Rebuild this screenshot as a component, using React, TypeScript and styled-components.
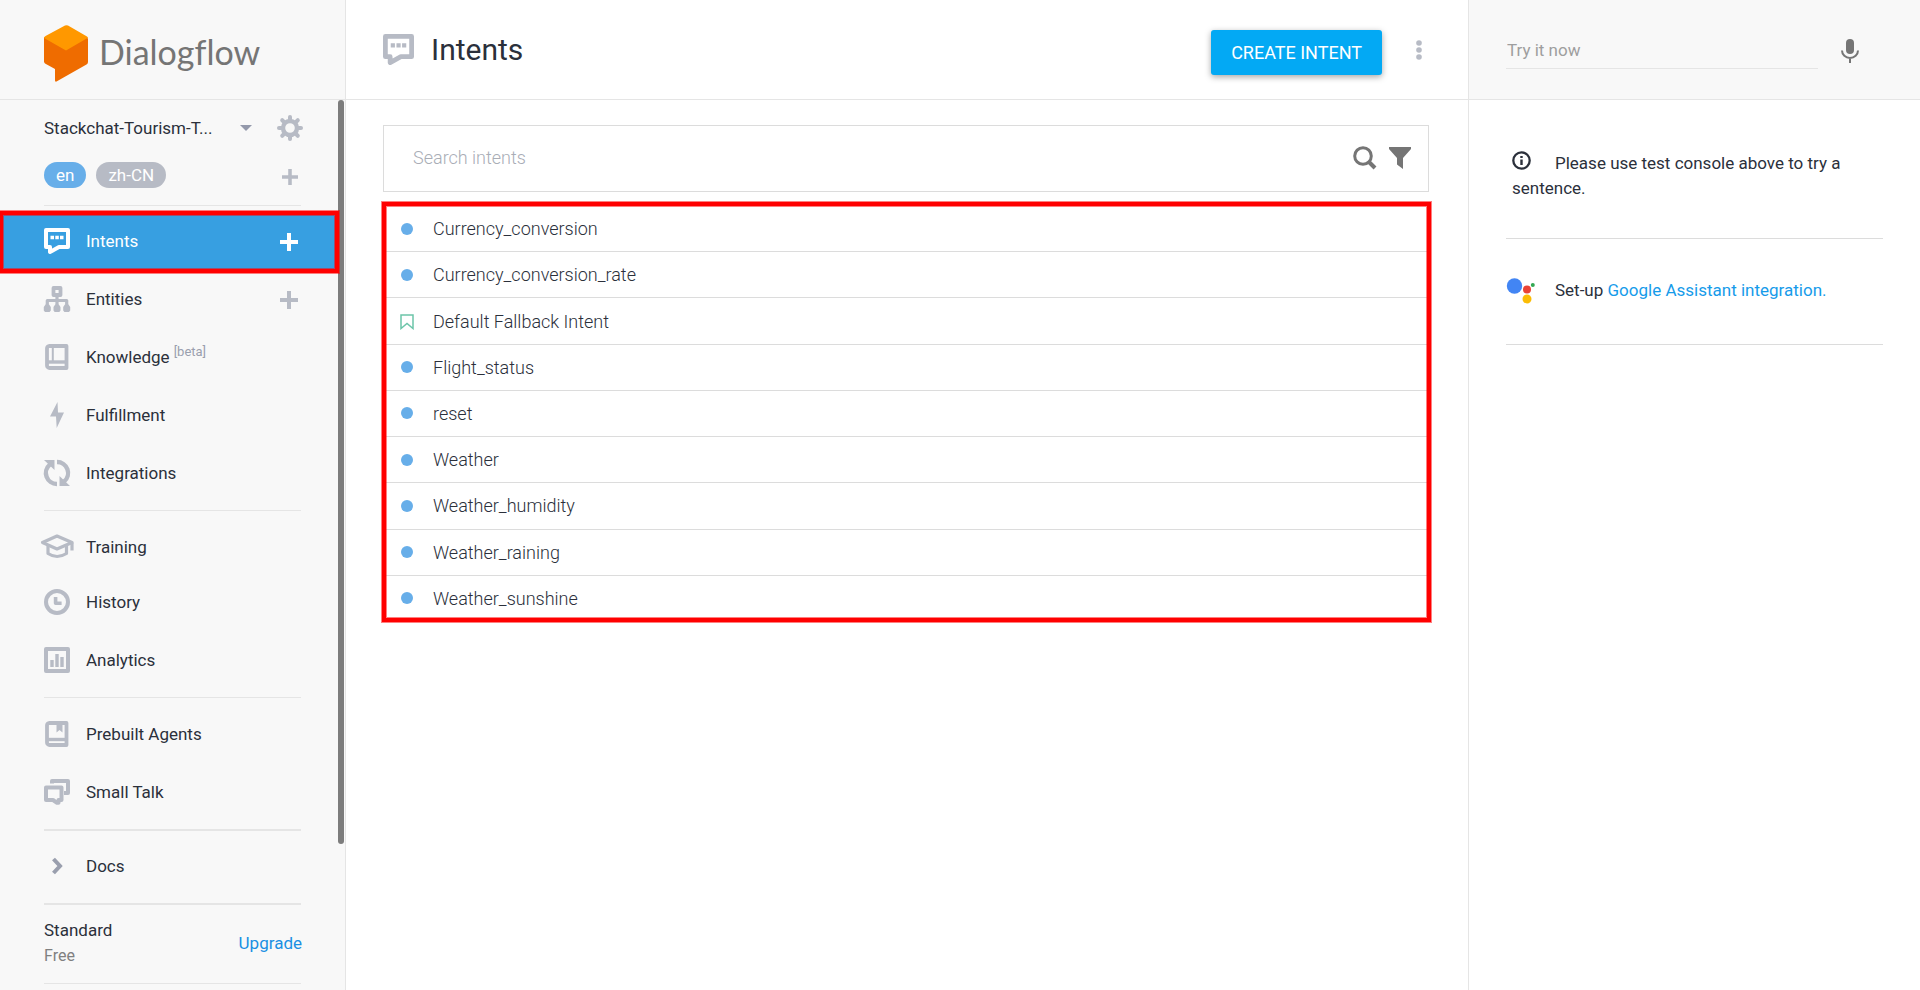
import React from "react";
import styled, { createGlobalStyle, css } from "styled-components";

const color = {
  text: "#2b303b",
  icon: "#b7bbc5",
  line: "#e5e5e5",
  rowLine: "#dcdcdc",
  panel: "#f8f8f8",
  active: "#379fe1",
  pill: "#67aee9",
  link: "#1a8fe3",
  mark: "#ff0000",
};

const GlobalStyle = createGlobalStyle`
  *, *::before, *::after { box-sizing: border-box; }
  body {
    margin: 0;
    background: #fff;
    color: ${color.text};
    font-family: Roboto, "Liberation Sans", sans-serif;
    font-size: 17px;
  }
  button, input { font: inherit; color: inherit; }
  button { background: none; border: 0; padding: 0; cursor: pointer; }
  a { text-decoration: none; }
  svg { display: block; flex: none; }
`;

const Page = styled.div`
  display: grid;
  grid-template-columns: 346px minmax(0, 1fr) 452px;
  min-height: 100vh;
`;

const headerBar = css`
  display: flex;
  align-items: center;
  height: 100px;
  border-bottom: 1px solid ${color.line};
`;

const Sidebar = styled.aside`
  display: flex;
  flex-direction: column;
  background: ${color.panel};
  border-right: 1px solid ${color.line};
`;

const Brand = styled.div`
  ${headerBar}
  gap: 9px;
  padding: 9px 0 0 44px;
`;

const BrandName = styled.span`
  padding-bottom: 6px;
  color: #757575;
  font-family: Lato, sans-serif;
  font-size: 34px;
  font-variant-ligatures: none;
`;

const SideBody = styled.div`
  position: relative;
  flex: 1;
  padding-right: 7px;
`;

const ScrollThumb = styled.div`
  position: absolute;
  top: 0;
  right: 1px;
  width: 6px;
  height: 744px;
  border-radius: 3px;
  background: #7d7d7d;
`;

const Agent = styled.div`
  display: flex;
  align-items: center;
  height: 56px;
  padding: 0 35px 0 44px;
`;

const AgentName = styled.button`
  display: flex;
  flex: 1;
  align-items: center;
  justify-content: space-between;
  margin-right: 25px;
`;

const Languages = styled.div`
  display: flex;
  align-items: center;
  gap: 10px;
  height: 38px;
  padding: 0 40px 0 44px;
`;

const Pill = styled.button<{ $on?: boolean }>`
  height: 26px;
  padding: 0 12px;
  border-radius: 13px;
  background: ${(p) => (p.$on ? color.pill : color.icon)};
  color: #fff;
  line-height: 26px;
`;

const AddButton = styled.button`
  margin-left: auto;
  padding-top: 2px;
`;

const Divider = styled.hr<{ $thick?: boolean }>`
  height: ${(p) => (p.$thick ? 2 : 1)}px;
  margin: 8px 37px ${(p) => (p.$thick ? 6 : 7)}px 44px;
  border: 0;
  background: ${color.line};
`;

const LanguageDivider = styled(Divider)`
  margin-top: 11px;
  margin-bottom: 6px;
`;

const NavRow = styled.div<{ $active?: boolean; $compact?: boolean }>`
  position: relative;
  display: flex;
  align-items: center;
  height: ${(p) => (p.$compact ? 55 : 58)}px;
  padding: ${(p) => (p.$compact ? "2px" : "0")} 40px 0 44px;
  background: ${(p) => (p.$active ? color.active : "transparent")};
  color: ${(p) => (p.$active ? "#fff" : color.icon)};
`;

const NavLink = styled.a<{ $active?: boolean }>`
  display: flex;
  align-items: center;
  gap: 16px;
  color: ${(p) => (p.$active ? "#fff" : color.text)};
  svg { color: ${(p) => (p.$active ? "#fff" : color.icon)}; overflow: visible; }
`;

const Beta = styled.sup`
  margin-left: 4px;
  color: #9a9fae;
  font-size: 13px;
  line-height: 0;
`;

const Highlight = styled.div`
  position: absolute;
  border: 4px solid ${color.mark};
  box-shadow: 0 0 0 1px rgba(255, 0, 0, 0.5), inset 0 0 0 1px rgba(255, 0, 0, 0.5);
  pointer-events: none;
  z-index: 1;
`;

const NavHighlight = styled(Highlight)`
  inset: -1px -1px -3px -1px;
`;

const ListHighlight = styled(Highlight)`
  inset: -4px -2px 0 -1px;
`;

const Plan = styled.div`
  display: flex;
  align-items: center;
  justify-content: space-between;
  height: 64px;
  padding: 0 36px 0 44px;
`;

const PlanName = styled.div`
  line-height: 26px;
`;

const PlanTier = styled.div`
  color: #808080;
  font-size: 16px;
  line-height: 26px;
`;

const Link = styled.a`
  color: ${color.link};
`;

const Main = styled.main`
  min-width: 0;
`;

const MainHeader = styled.header`
  ${headerBar}
  padding: 0 46px 0 37px;
`;

const Title = styled.h1`
  flex: 1;
  margin: 0 0 0 17px;
  font-size: 30px;
  font-weight: 400;
`;

const CreateButton = styled.button`
  height: 45px;
  margin: 5px 34px 0 0;
  padding: 0 20px;
  border-radius: 3px;
  background: #03a9f4;
  box-shadow: 0 2px 6px rgba(0, 0, 0, 0.35);
  color: #fff;
  font-size: 18px;
  text-transform: uppercase;
`;

const MainBody = styled.div`
  padding: 25px 39px 0 37px;
`;

const Search = styled.div`
  display: flex;
  align-items: center;
  gap: 12px;
  height: 67px;
  padding: 0 17px 2px 29px;
  border: 1px solid ${color.rowLine};
  color: #757575;
`;

const SearchInput = styled.input`
  flex: 1;
  min-width: 0;
  padding: 0;
  border: 0;
  outline: 0;
  background: none;
  font-size: 18px;
  font-weight: 300;
  &::placeholder { color: #a9adb6; opacity: 1; }
`;

const List = styled.ul`
  position: relative;
  display: grid;
  grid-auto-rows: 1fr;
  min-height: 416px;
  margin: 14px 0 0;
  padding: 0;
  list-style: none;
`;

const IntentRow = styled.li`
  display: flex;
  align-items: center;
  padding-left: 17px;
  border-bottom: 1px solid ${color.rowLine};
  font-size: 18px;
  font-weight: 300;
`;

const Marker = styled.span`
  display: flex;
  width: 33px;
`;

const Dot = styled.span`
  width: 12px;
  height: 12px;
  margin-left: 1px;
  border-radius: 50%;
  background: ${color.pill};
`;

const Console = styled.aside`
  border-left: 1px solid ${color.line};
`;

const ConsoleHeader = styled.div`
  ${headerBar}
  gap: 23px;
  padding: 2px 61px 0 37px;
  background: ${color.panel};
  color: #757575;
`;

const TryInput = styled.input`
  flex: 1;
  min-width: 0;
  height: 36px;
  padding: 0 1px;
  border: 0;
  border-bottom: 1px solid ${color.line};
  outline: 0;
  background: none;
  &::placeholder { color: #9e9e9e; opacity: 1; }
`;

const Note = styled.p`
  height: 139px;
  margin: 0 37px;
  padding: 51px 6px 0;
  border-bottom: 1px solid ${color.rowLine};
  line-height: 25px;
  svg { display: inline-block; margin-right: 24px; vertical-align: -1px; }
`;

const Assistant = styled.div`
  display: flex;
  align-items: center;
  gap: 20px;
  height: 106px;
  margin: 0 37px;
  padding-bottom: 4px;
  border-bottom: 1px solid ${color.rowLine};
  svg { margin-top: 3px; }
`;

const ConsoleLink = styled(Link)`
  color: #169bea;
`;

const Plus = ({ size = 18, weight = 4 }: { size?: number; weight?: number }) => (
  <svg width={size} height={size} viewBox="0 0 18 18" stroke="currentColor" strokeWidth={weight} aria-hidden="true">
    <path d="M9 0v18M0 9h18" />
  </svg>
);

const LanguageAdd = styled(AddButton)`
  padding-top: 4px;
  color: ${color.icon};
`;

const Glyph = ({ size = 26, children }: { size?: number; children: React.ReactNode }) => (
  <svg
    width={size}
    height={size}
    viewBox="0 0 26 26"
    fill="none"
    stroke="currentColor"
    strokeWidth="4"
    strokeLinejoin="round"
    aria-hidden="true"
  >
    {children}
  </svg>
);

const IntentIcon = ({ size }: { size?: number }) => (
  <Glyph size={size}>
    <path d="M2 2H24V19H15L6 24V19H2Z" />
    <path d="M6.500 9.500h3.500M11.300 9.500h3.500M16 9.500h3.500" strokeWidth="3.500" />
  </Glyph>
);

const TitleIcon = styled.span`
  color: ${color.icon};
`;

const icons = {
  intents: <IntentIcon />,
  entities: (
    <Glyph>
      <rect x="9.500" y="2" width="7" height="7" strokeWidth="3.800" />
      <path d="M13 10v9M3.300 20v-5.500h19.400v5.500" strokeWidth="3.200" />
      <path
        d="M1.500 18.500h3.600l1.700 2.500v3.500l-1.200 1.500h-4.600l-1.200-1.500v-3.500zM11.200 18.500h3.600l1.700 2.500v3.500l-1.200 1.500h-4.600l-1.200-1.500v-3.500zM20.900 18.500h3.600l1.700 2.500v3.500l-1.200 1.500h-4.600l-1.200-1.500v-3.500z"
        fill="currentColor"
        stroke="none"
      />
    </Glyph>
  ),
  knowledge: (
    <Glyph>
      <path d="M5 2h17.500v22H5.500a2.500 2.500 0 0 1-2.500-2.500V4.500a2.500 2.500 0 0 1 2-2.500z" strokeWidth="3.800" />
      <path d="M8.800 2v15" strokeWidth="2" />
      <path d="M3 18h19" strokeWidth="3.400" />
    </Glyph>
  ),
  fulfillment: (
    <Glyph>
      <path d="M13.500 0L6 14.500h6L12.700 26L20 10.500h-6z" fill="currentColor" stroke="none" />
    </Glyph>
  ),
  integrations: (
    <Glyph>
      <path d="M13 24A11 11 0 0 1 5.800 4.600M13 2A11 11 0 0 1 20.200 21.400" strokeWidth="4.400" />
      <path d="M0 0h10.500v10zM26 26h-10.500v-10z" fill="currentColor" stroke="none" />
    </Glyph>
  ),
  training: (
    <Glyph>
      <path d="M-1.500 8.500L13 2L28 8.500L13 15Z" strokeWidth="3.200" />
      <path d="M4 11v8.500q9 6 18.500 0v-8.500M28 8.500v8" strokeWidth="3.200" />
    </Glyph>
  ),
  history: (
    <Glyph>
      <circle cx="13" cy="13" r="11" />
      <path d="M11.600 8v6.200h6" strokeWidth="3.600" />
    </Glyph>
  ),
  analytics: (
    <Glyph>
      <rect x="2" y="2" width="22" height="22" />
      <path d="M8 20v-7M13 20v-13M18 20v-10" strokeWidth="3.400" />
    </Glyph>
  ),
  prebuilt: (
    <Glyph>
      <path d="M5 2h17.500v22H5.500a2.500 2.500 0 0 1-2.500-2.500V4.500a2.500 2.500 0 0 1 2-2.500z" strokeWidth="3.800" />
      <path d="M3 18.500h19" strokeWidth="3.400" />
      <path d="M12.500 2h6v9.500l-3-2.500l-3 2.500z" fill="currentColor" stroke="none" />
    </Glyph>
  ),
  smallTalk: (
    <Glyph>
      <path d="M2 8.500h15.500v12.500h-3v2.800h-1.500l-4-2.800h-7z" />
      <path d="M8 4.500v-2.500h16v12h-4" />
    </Glyph>
  ),
  docs: (
    <Glyph>
      <path d="M9.500 6l6.500 7l-6.500 7" stroke="#9a9fae" strokeLinejoin="miter" />
    </Glyph>
  ),
};

const Logo = () => (
  <svg width="46" height="58" viewBox="0 0 46 58" aria-hidden="true">
    <path
      d="M1 13L22 25L44 13Q45 14 45 15.500V38Q45 39.500 43.500 40.500L13.500 57.500Q12 58 12 56.500V45L2 39.500Q1 38.500 1 37.500Z"
      fill="#ef6c00"
      transform="translate(-1 -1)"
    />
    <path d="M0 13Q0 12 1.500 11L21 .5Q22.500 0 24 .5L43 11.500Q44.500 12.500 43.500 13L22 25.500Z" fill="#ff9800" />
  </svg>
);

const Gear = () => (
  <svg width="26" height="26" viewBox="0 0 26 26" fill="none" stroke={color.icon} aria-hidden="true">
    <circle cx="13" cy="13" r="7" strokeWidth="4.400" />
    {[0, 45, 90, 135, 180, 225, 270, 315].map((a) => (
      <path key={a} d="M13 5.500V2" strokeWidth="4" strokeLinecap="round" transform={`rotate(${a} 13 13)`} />
    ))}
  </svg>
);

type Item = { label: string; icon: React.ReactNode; active?: boolean; add?: boolean; beta?: boolean; compact?: boolean };

const groups: { items: Item[]; thick?: boolean }[] = [
  {
    items: [
      { label: "Intents", icon: icons.intents, active: true, add: true },
      { label: "Entities", icon: icons.entities, add: true },
      { label: "Knowledge", icon: icons.knowledge, beta: true },
      { label: "Fulfillment", icon: icons.fulfillment },
      { label: "Integrations", icon: icons.integrations },
    ],
  },
  {
    items: [
      { label: "Training", icon: icons.training, compact: true },
      { label: "History", icon: icons.history },
      { label: "Analytics", icon: icons.analytics },
    ],
  },
  {
    thick: true,
    items: [
      { label: "Prebuilt Agents", icon: icons.prebuilt },
      { label: "Small Talk", icon: icons.smallTalk },
    ],
  },
  { thick: true, items: [{ label: "Docs", icon: icons.docs }] },
];

const intents = [
  "Currency_conversion",
  "Currency_conversion_rate",
  "Default Fallback Intent",
  "Flight_status",
  "reset",
  "Weather",
  "Weather_humidity",
  "Weather_raining",
  "Weather_sunshine",
];

const NavItem = ({ item }: { item: Item }) => (
  <NavRow $active={item.active} $compact={item.compact}>
    <NavLink href="#" $active={item.active}>
      {item.icon}
      <span>
        {item.label}
        {item.beta && <Beta>[beta]</Beta>}
      </span>
    </NavLink>
    {item.add && (
      <AddButton aria-label={`Add to ${item.label}`}>
        <Plus />
      </AddButton>
    )}
    {item.active && <NavHighlight />}
  </NavRow>
);

export default function App() {
  return (
    <>
      <GlobalStyle />
      <Page>
        <Sidebar>
          <Brand>
            <Logo />
            <BrandName>Dialogflow</BrandName>
          </Brand>
          <SideBody>
            <Agent>
              <AgentName>
                Stackchat-Tourism-T...
                <svg width="12" height="6" viewBox="0 0 12 6" fill="#9499ab" aria-hidden="true">
                  <path d="M0 0h12L6 6z" />
                </svg>
              </AgentName>
              <button aria-label="Agent settings">
                <Gear />
              </button>
            </Agent>
            <Languages>
              <Pill $on>en</Pill>
              <Pill>zh-CN</Pill>
              <LanguageAdd aria-label="Add language">
                <Plus size={16} />
              </LanguageAdd>
            </Languages>
            <LanguageDivider />
            <nav>
              {groups.map((group, i) => (
                <React.Fragment key={i}>
                  {group.items.map((item) => (
                    <NavItem key={item.label} item={item} />
                  ))}
                  <Divider $thick={group.thick} />
                </React.Fragment>
              ))}
            </nav>
            <Plan>
              <div>
                <PlanName>Standard</PlanName>
                <PlanTier>Free</PlanTier>
              </div>
              <Link href="#">Upgrade</Link>
            </Plan>
            <Divider />
            <ScrollThumb />
          </SideBody>
        </Sidebar>

        <Main>
          <MainHeader>
            <TitleIcon>
              <IntentIcon size={31} />
            </TitleIcon>
            <Title>Intents</Title>
            <CreateButton>Create intent</CreateButton>
            <button aria-label="More options">
              <svg width="6" height="20" viewBox="0 0 6 20" fill={color.icon} aria-hidden="true">
                <circle cx="3" cy="3" r="2.800" />
                <circle cx="3" cy="10" r="2.800" />
                <circle cx="3" cy="17" r="2.800" />
              </svg>
            </button>
          </MainHeader>
          <MainBody>
            <Search>
              <SearchInput placeholder="Search intents" aria-label="Search intents" />
              <button aria-label="Search">
                <svg width="24" height="24" viewBox="0 0 24 24" fill="none" stroke="currentColor" aria-hidden="true">
                  <circle cx="10" cy="10" r="8.300" strokeWidth="3" />
                  <path d="M15.500 15.500l6.500 6.500" strokeWidth="4" />
                </svg>
              </button>
              <button aria-label="Filter">
                <svg width="22" height="22" viewBox="0 0 22 22" fill="currentColor" aria-hidden="true">
                  <path d="M0 0H22V2L14 11V22L8 17.500V11L0 2Z" />
                </svg>
              </button>
            </Search>
            <List>
              {intents.map((name) => (
                <IntentRow key={name}>
                  <Marker>
                    {name === "Default Fallback Intent" ? (
                      <svg width="14" height="18" viewBox="0 -2 14 18" fill="none" stroke="#6cc5a9" strokeWidth="1.500" aria-hidden="true">
                        <path d="M1 1h12v13.500l-6-5l-6 5z" />
                      </svg>
                    ) : (
                      <Dot />
                    )}
                  </Marker>
                  {name}
                </IntentRow>
              ))}
              <ListHighlight as="li" />
            </List>
          </MainBody>
        </Main>

        <Console>
          <ConsoleHeader>
            <TryInput placeholder="Try it now" aria-label="Try it now" />
            <button aria-label="Speak">
              <svg width="18" height="24" viewBox="0 0 18 24" aria-hidden="true">
                <rect x="5" y="0" width="8" height="15" rx="4" fill="currentColor" />
                <path d="M1 11.500a8 7.500 0 0 0 16 0M9 19v5" fill="none" stroke="currentColor" strokeWidth="2" />
              </svg>
            </button>
          </ConsoleHeader>
          <Note>
            <svg width="19" height="19" viewBox="0 0 19 19" fill="none" stroke={color.text} aria-hidden="true">
              <circle cx="9.500" cy="9.500" r="8.200" strokeWidth="2.300" />
              <path d="M9.500 8.500v5.500M9.500 5v2" strokeWidth="2.400" />
            </svg>
            Please use test console above to try a sentence.
          </Note>
          <Assistant>
            <svg width="29" height="26" viewBox="0 0 29 26" aria-hidden="true">
              <circle cx="8.500" cy="8" r="7.700" fill="#4285f4" />
              <circle cx="21" cy="11.500" r="4" fill="#ea4335" />
              <circle cx="21" cy="21" r="4.500" fill="#fbbc05" />
              <circle cx="26.800" cy="7" r="2" fill="#34a853" />
            </svg>
            <span>
              Set-up <ConsoleLink href="#">Google Assistant integration.</ConsoleLink>
            </span>
          </Assistant>
        </Console>
      </Page>
    </>
  );
}
